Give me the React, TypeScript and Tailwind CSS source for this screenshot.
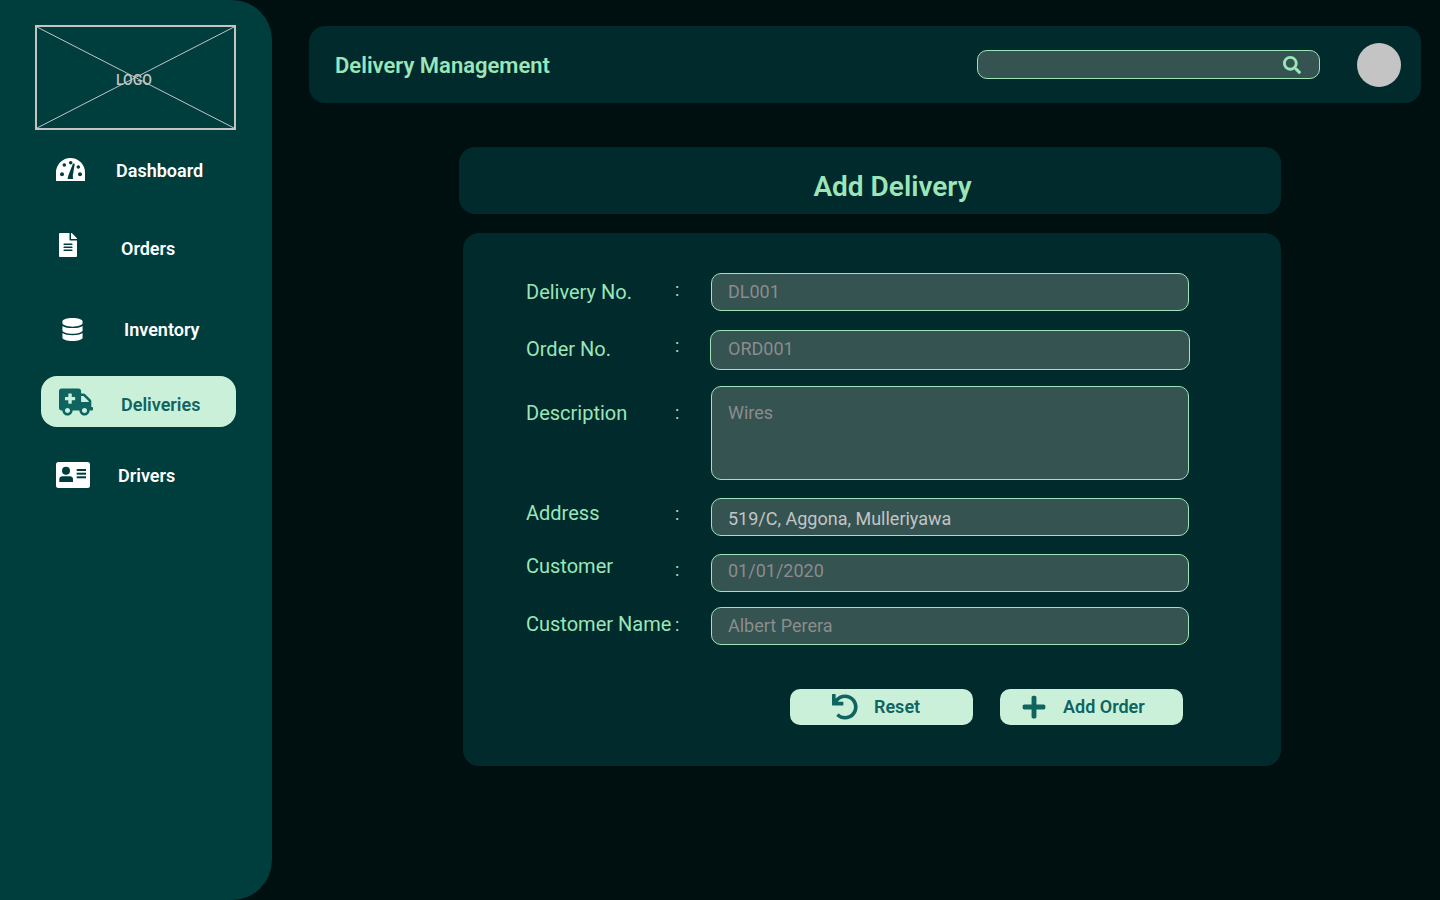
import { FaAmbulance, FaDatabase, FaFileAlt, FaPlus, FaSearch, FaUndo } from "react-icons/fa";

function GaugeIcon() {
  return (
    <svg className="h-[23px] w-[29px]" viewBox="0 0 29 23">
      <path fill="#ffffff" d="M0 23V14.5A14.5 14.5 0 0 1 29 14.5V23Z" />
      <g fill="#003d3d">
        <circle cx="6" cy="16.3" r="2" />
        <circle cx="24" cy="16.3" r="2" />
        <circle cx="8.3" cy="7" r="1.8" />
        <circle cx="14.7" cy="4.7" r="1.8" />
        <circle cx="22.3" cy="9" r="1.8" />
        <path d="M11.5 21 12.5 17 17 5.5 18.8 5.8 16.8 17.5 17 21Z" />
      </g>
    </svg>
  );
}

function CardIcon() {
  return (
    <svg className="h-[26px] w-[34px]" viewBox="0 0 34 26">
      <rect width="34" height="26" rx="2.5" fill="#ffffff" />
      <g fill="#003d3d">
        <circle cx="10" cy="8.7" r="4" />
        <path d="M3.3 20V17.5Q3.3 14.2 6.6 14.2H13.6Q17 14.2 17 17.5V20Z" />
        <rect x="20.7" y="7" width="9.3" height="2" />
        <rect x="20.7" y="10.7" width="9.3" height="2" />
        <rect x="20.7" y="14.3" width="9.3" height="2" />
      </g>
    </svg>
  );
}

const NAV = [
  { label: "Dashboard", Icon: GaugeIcon, row: "mt-[16px] h-[48px] pl-[56px] text-white", icon: "w-[60px] -mt-[1px]", text: "" },
  { label: "Orders", Icon: FaFileAlt, row: "mt-[30px] h-[48px] pl-[56px] text-white", icon: "w-[65px] text-[24px] -mt-[6px]", text: "" },
  { label: "Inventory", Icon: FaDatabase, row: "mt-[33px] h-[48px] pl-[61px] text-white", icon: "w-[63px] text-[23px]", text: "" },
  { label: "Deliveries", Icon: FaAmbulance, row: "mt-[23px] h-[51px] ml-[41px] w-[195px] pl-[18px] rounded-[16px] bg-[#caf0d9] text-[#0f6460]", icon: "w-[62px] text-[34px]", text: "pt-[5px]" },
  { label: "Drivers", Icon: CardIcon, row: "mt-[24px] h-[48px] pl-[56px] text-white", icon: "w-[62px]", text: "" },
];

const FIELDS = [
  { label: "Delivery No.", value: "DL001", row: "mt-[40px] pl-[248px]", box: "h-[38px] w-[478px] pl-[16px] pt-[6px]", labelCls: "pt-[6px]", colonCls: "pt-[4px]" },
  { label: "Order No.", value: "ORD001", row: "mt-[19px] pl-[247px]", box: "h-[40px] w-[480px] pl-[17px] pt-[6px]", labelCls: "pt-[6px]", colonCls: "pt-[3px]" },
  { label: "Description", value: "Wires", row: "mt-[16px] pl-[248px]", box: "h-[94px] w-[478px] pl-[16px] pt-[14px]", labelCls: "pt-[14px]", colonCls: "pt-[14px]" },
  { label: "Address", value: "519/C, Aggona, Mulleriyawa", row: "mt-[18px] pl-[248px]", box: "h-[38px] w-[478px] pl-[16px] pt-[8px] !text-[#c4c4c4]", labelCls: "pt-[2px]", colonCls: "pt-[3px]" },
  { label: "Customer", value: "01/01/2020", row: "mt-[18px] pl-[248px]", box: "h-[38px] w-[478px] pl-[16px] pt-[4px]", labelCls: "-mt-[1px]", colonCls: "pt-[3px]" },
  { label: "Customer Name", value: "Albert Perera", row: "mt-[15px] pl-[248px]", box: "h-[38px] w-[478px] pl-[16px] pt-[6px]", labelCls: "pt-[4px]", colonCls: "pt-[5px]" },
];

export default function App() {
  return (
    <div className="flex h-[900px] w-[1440px] overflow-hidden bg-[#000f0f] font-['Roboto',sans-serif]">
      {/* Sidebar */}
      <aside className="h-full w-[272px] shrink-0 rounded-r-[40px] bg-[#003d3d] pt-[25px]">
        <div className="relative ml-[35px] h-[105px] w-[201px] border-2 border-[#c4c4c4]">
          <svg className="h-full w-full" viewBox="0 0 197 101" preserveAspectRatio="none">
            <line x1="0" y1="0" x2="197" y2="101" stroke="#c4c4c4" strokeWidth="1" />
            <line x1="197" y1="0" x2="0" y2="101" stroke="#c4c4c4" strokeWidth="1" />
          </svg>
          <span className="absolute left-[79px] top-[43px] text-[14px] font-medium text-[#c4c4c4]">LOGO</span>
        </div>
        <nav>
          {NAV.map(({ label, Icon, row, icon, text }) => (
            <div key={label} className={`flex items-center ${row}`}>
              <div className={`shrink-0 ${icon}`}>
                <Icon />
              </div>
              <span className={`text-[18px] font-semibold ${text}`}>{label}</span>
            </div>
          ))}
        </nav>
      </aside>

      {/* Main */}
      <main className="flex-1 pl-[37px] pt-[26px]">
        <header className="flex h-[77px] w-[1112px] items-center rounded-[16px] bg-[#002a2c] pl-[26px]">
          <h1 className="pt-[2px] text-[22px] font-semibold text-[#9be6b8]">Delivery Management</h1>
          <div className="ml-[427px] flex h-[29px] w-[343px] items-center justify-end rounded-[10px] border border-[#9be6b8] bg-[#345351] pr-[18px] text-[18px] text-[#9be6b8]">
            <FaSearch />
          </div>
          <div className="ml-[37px] h-[44px] w-[44px] rounded-full bg-[#c4c4c4]" />
        </header>

        <div className="ml-[150px] mt-[44px] flex h-[67px] w-[822px] items-center justify-center rounded-[16px] bg-[#002a2c] pl-[45px] pt-[12px]">
          <h2 className="text-[28px] font-semibold text-[#9be6b8]">Add Delivery</h2>
        </div>

        <section className="ml-[154px] mt-[19px] h-[533px] w-[818px] overflow-hidden rounded-[16px] bg-[#002a2c]">
          {FIELDS.map((f) => (
            <div key={f.label} className={`relative flex items-start ${f.row}`}>
              <span className={`absolute left-[63px] text-[20px] leading-[26px] text-[#9be6b8] ${f.labelCls}`}>{f.label}</span>
              <span className={`absolute left-[212px] text-[18px] leading-[26px] text-[#9be6b8] ${f.colonCls}`}>:</span>
              <div className={`rounded-[10px] border border-[#9be6b8] bg-[#345351] text-[18px] leading-[24px] text-[#8c8c8c] ${f.box}`}>
                {f.value}
              </div>
            </div>
          ))}

          <div className="mt-[44px] flex gap-[27px] pl-[327px]">
            <button className="flex h-[36px] w-[183px] items-center rounded-[10px] bg-[#caf0d9] pl-[42px] text-[18px] font-semibold text-[#0f6460]">
              <FaUndo className="mr-[16px] text-[26px]" />
              <span className="-mt-[2px]">Reset</span>
            </button>
            <button className="flex h-[36px] w-[183px] items-center rounded-[10px] bg-[#caf0d9] pl-[21px] text-[18px] font-semibold text-[#0f6460]">
              <FaPlus className="mr-[16px] text-[26px]" />
              <span className="-mt-[2px]">Add Order</span>
            </button>
          </div>
        </section>
      </main>
    </div>
  );
}
